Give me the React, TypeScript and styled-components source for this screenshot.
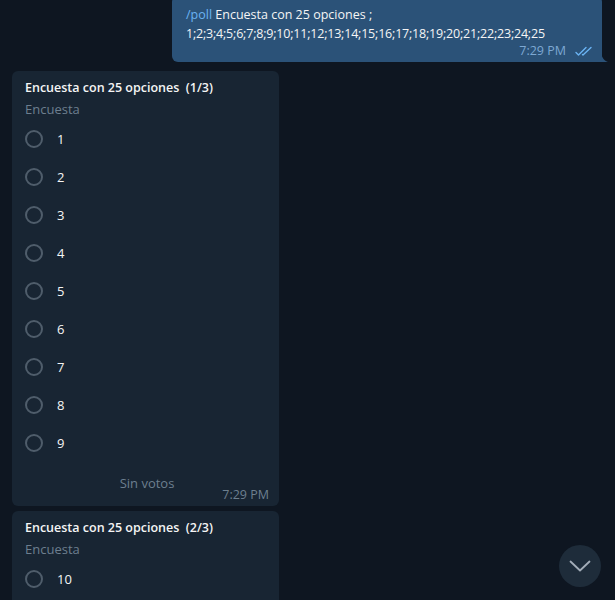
import styled, { createGlobalStyle } from "styled-components";

const GlobalStyle = createGlobalStyle`
  html, body {
    margin: 0;
    padding: 0;
    background: #0e1621;
    overflow: hidden;
  }
  body {
    font-family: "Open Sans", "DejaVu Sans", sans-serif;
    color: #f5f5f5;
  }
`;

const Chat = styled.div`
  display: flex;
  flex-direction: column;
  width: 615px;
  height: 600px;
  overflow: hidden;
`;

const OutRow = styled.div`
  display: flex;
  justify-content: flex-end;
  padding-right: 13px;
  margin-top: -4px;
`;

const OutBubble = styled.div`
  position: relative;
  width: 430px;
  box-sizing: border-box;
  background: #2b5278;
  border-radius: 6px 6px 0 6px;
  padding: 9px 9px 4px 14px;
`;

const Tail = styled.svg`
  position: absolute;
  right: -6px;
  bottom: 0;
`;

const MsgText = styled.div`
  font-size: 12.5px;
  line-height: 19px;
  color: #f5f5f5;
`;

const Numbers = styled.span`
  letter-spacing: -0.2px;
`;

const Command = styled.span`
  color: #6ab3f3;
`;

const Meta = styled.div<{ $tone: "out" | "in" }>`
  display: flex;
  justify-content: flex-end;
  align-items: center;
  gap: 9px;
  font-size: 12.5px;
  line-height: 14px;
  color: ${(p) => (p.$tone === "out" ? "#7da8d3" : "#6d7f8f")};
`;

const OutMeta = styled(Meta)`
  margin-top: 1px;
`;

const InColumn = styled.div`
  display: flex;
  flex-direction: column;
  gap: 5px;
  margin-top: 9px;
  padding-left: 12px;
`;

const PollBubble = styled.div`
  width: 267px;
  box-sizing: border-box;
  background: #182533;
  border-radius: 6px;
  padding: 8px 10px 4px 13px;
`;

const PollTitle = styled.div`
  font-size: 12.5px;
  font-weight: 600;
  line-height: 18px;
  color: #f5f5f5;
`;

const PollKind = styled.div`
  margin-top: 3px;
  font-size: 13px;
  line-height: 18px;
  color: #6d7f8f;
`;

const Options = styled.div`
  display: flex;
  flex-direction: column;
  margin-top: 2px;
`;

const Option = styled.div`
  display: flex;
  align-items: center;
  height: 38px;
  gap: 14px;
  font-size: 13px;
  color: #f5f5f5;
`;

const Radio = styled.span`
  width: 14px;
  height: 14px;
  border: 2px solid #4f5d6b;
  border-radius: 50%;
  flex-shrink: 0;
`;

const NoVotes = styled.div`
  margin-top: 12px;
  text-align: center;
  font-size: 13px;
  line-height: 18px;
  color: #6d7f8f;
`;

const PollMeta = styled(Meta)`
  margin-top: -4px;
`;

const ScrollDown = styled.button`
  position: fixed;
  right: 14px;
  bottom: 13px;
  width: 42px;
  height: 42px;
  border: none;
  border-radius: 50%;
  background: #1e2c3a;
  display: flex;
  align-items: center;
  justify-content: center;
  padding: 0;
`;

const DoubleCheck = () => (
  <svg width="18" height="11" viewBox="0 0 18 11" fill="none">
    <path d="M1 6.5 L3.5 9 L11 1.5" stroke="#6ab3f3" strokeWidth="1.4" strokeLinecap="round" strokeLinejoin="round" />
    <path d="M7.5 8.5 L8 9 L16 1.5" stroke="#6ab3f3" strokeWidth="1.4" strokeLinecap="round" strokeLinejoin="round" />
  </svg>
);

const Poll = ({ part, options, footer }: { part: string; options: number[]; footer: boolean }) => (
  <PollBubble>
    <PollTitle>Encuesta con 25 opciones&nbsp; ({part})</PollTitle>
    <PollKind>Encuesta</PollKind>
    <Options>
      {options.map((n) => (
        <Option key={n}>
          <Radio />
          <span>{n}</span>
        </Option>
      ))}
    </Options>
    {footer && (
      <>
        <NoVotes>Sin votos</NoVotes>
        <PollMeta $tone="in">7:29 PM</PollMeta>
      </>
    )}
  </PollBubble>
);

export default function App() {
  return (
    <>
      <GlobalStyle />
      <Chat>
        <OutRow>
          <OutBubble>
            <MsgText>
              <Command>/poll</Command> Encuesta con 25 opciones ;
              <br />
              <Numbers>1;2;3;4;5;6;7;8;9;10;11;12;13;14;15;16;17;18;19;20;21;22;23;24;25</Numbers>
            </MsgText>
            <OutMeta $tone="out">
              <span>7:29 PM</span>
              <DoubleCheck />
            </OutMeta>
            <Tail width="7" height="12" viewBox="0 0 7 12">
              <path d="M0 0 C0 6 2 10 7 12 L0 12 Z" fill="#2b5278" />
            </Tail>
          </OutBubble>
        </OutRow>
        <InColumn>
          <Poll part="1/3" options={[1, 2, 3, 4, 5, 6, 7, 8, 9]} footer />
          <Poll part="2/3" options={[10, 11, 12]} footer={false} />
        </InColumn>
      </Chat>
      <ScrollDown>
        <svg width="22" height="12" viewBox="0 0 22 12" fill="none">
          <path d="M1.5 1.5 L11 10.5 L20.5 1.5" stroke="#a3adb8" strokeWidth="1.8" strokeLinecap="round" strokeLinejoin="round" />
        </svg>
      </ScrollDown>
    </>
  );
}
